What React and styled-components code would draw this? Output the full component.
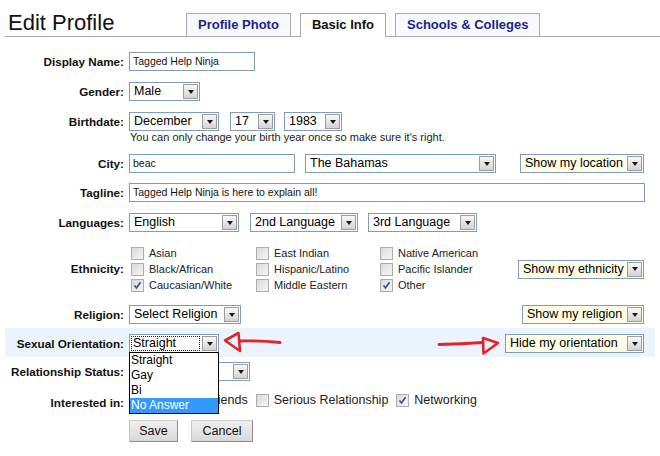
import React from "react";
import styled, { createGlobalStyle } from "styled-components";

const GlobalStyle = createGlobalStyle`
  html, body {
    margin: 0;
    padding: 0;
    background: #ffffff;
  }
  body {
    font-family: "Liberation Sans", Arial, sans-serif;
    color: #000;
  }
`;

const Page = styled.div`
  width: 660px;
  height: 456px;
  position: relative;
  overflow: hidden;
  background: #fff;
`;

const Header = styled.div`
  display: flex;
  align-items: flex-end;
  height: 36px;
  margin-left: 5px;
  padding-left: 3px;
  border-bottom: 1px solid #a9a9a9;
`;

const Title = styled.h1`
  width: 178px;
  margin: 0;
  font-size: 22px;
  font-weight: normal;
  line-height: 26px;
  color: #111;
`;

const Tabs = styled.div`
  display: flex;
  gap: 9px;
`;

const Tab = styled.div`
  height: ${(p) => (p.$active ? 23 : 22)}px;
  margin-bottom: ${(p) => (p.$active ? -1 : 0)}px;
  padding: 0 11px;
  border: 1px solid #a9a9a9;
  border-bottom: none;
  background: ${(p) => (p.$active ? "#ffffff" : "#f6f9fe")};
  color: ${(p) => (p.$active ? "#111" : "#1d1f8c")};
  font-size: 13px;
  font-weight: bold;
  line-height: 22px;
  white-space: nowrap;
`;

const Form = styled.div`
  width: 650px;
  margin-left: 5px;
`;

const Row = styled.div`
  display: grid;
  grid-template-columns: 119px 1fr;
  column-gap: 5px;
  align-items: start;
  margin-top: ${(p) => p.$mt}px;
  padding: ${(p) => (p.$band ? "6px 11px 4px 0" : "0 11px 0 0")};
  background: ${(p) => (p.$band ? "#ebf3fc" : "transparent")};
`;

const Label = styled.div`
  text-align: right;
  font-size: 11.7px;
  font-weight: bold;
  line-height: ${(p) => p.$lh || 19}px;
  color: #111;
  white-space: nowrap;
`;

const Field = styled.div`
  display: flex;
  align-items: ${(p) => (p.$center ? "center" : "flex-start")};
  min-width: 0;
`;

const Stack = styled.div`
  display: flex;
  flex-direction: column;
`;

const Controls = styled.div`
  display: flex;
`;

const Help = styled.div`
  padding-left: 1px;
  font-size: 11px;
  line-height: 13px;
  color: #222;
  white-space: nowrap;
`;

const TextInput = styled.div`
  box-sizing: border-box;
  width: ${(p) => p.$w}px;
  height: 19px;
  flex-shrink: 0;
  padding-left: 3px;
  border: 1px solid #7f9db9;
  background: #fff;
  font-size: 10.5px;
  line-height: 17px;
  color: #111;
  white-space: nowrap;
  overflow: hidden;
`;

const SelectBox = styled.div`
  position: relative;
  box-sizing: border-box;
  display: flex;
  align-items: center;
  flex-shrink: 0;
  width: ${(p) => p.$w}px;
  height: 19px;
  margin-left: ${(p) => (p.$right ? "auto" : `${p.$ml || 0}px`)};
  border: 1px solid #7f9db9;
  background: ${(p) => (p.$yellow ? "#fffde6" : "#ffffff")};
`;

const SelectText = styled.span`
  flex: 1;
  box-sizing: border-box;
  height: 15px;
  margin: 0 2px 0 1px;
  padding-left: ${(p) => (p.$focus ? 2 : 3)}px;
  outline: ${(p) => (p.$focus ? "1px dotted #222" : "none")};
  outline-offset: -1px;
  font-size: 12.5px;
  line-height: 15px;
  white-space: nowrap;
  overflow: hidden;
`;

const ArrowButton = styled.span`
  box-sizing: border-box;
  display: flex;
  align-items: center;
  justify-content: center;
  width: 15px;
  height: 15px;
  margin-right: 1px;
  border: 1px solid #9d9d9d;
  background: linear-gradient(#f8f8f8, #d3d3d3);
  &::after {
    content: "";
    border-left: 3.5px solid transparent;
    border-right: 3.5px solid transparent;
    border-top: 4px solid #1a1a1a;
  }
`;

const OptionList = styled.div`
  position: absolute;
  top: 17px;
  left: -1px;
  z-index: 5;
  box-sizing: border-box;
  width: ${(p) => p.$w}px;
  border: 1px solid #000;
  background: #fff;
`;

const Option = styled.div`
  padding-left: 1px;
  font-size: 12px;
  line-height: 15px;
  background: ${(p) => (p.$hover ? "#3399ff" : "transparent")};
  color: ${(p) => (p.$hover ? "#fff" : "#000")};
  white-space: nowrap;
`;

const CheckGrid = styled.div`
  display: grid;
  grid-template-columns: 125px 124px 130px;
  grid-auto-rows: 16px;
`;

const CheckRow = styled.div`
  display: flex;
  align-items: center;
`;

const CheckItem = styled.label`
  display: flex;
  align-items: center;
  margin-left: ${(p) => p.$ml || 0}px;
  margin-right: ${(p) => p.$mr || 0}px;
  font-size: ${(p) => p.$fs || 11}px;
  color: #222;
  white-space: nowrap;
`;

const Box = styled.span`
  box-sizing: border-box;
  display: inline-flex;
  align-items: center;
  justify-content: center;
  width: 13px;
  height: 13px;
  margin: 0 5px 0 2px;
  border: 1px solid #acacac;
  background: linear-gradient(135deg, #d9d9d9 0%, #f6f6f6 100%);
`;

const ButtonRow = styled.div`
  display: flex;
  gap: 13px;
`;

const Button = styled.div`
  box-sizing: border-box;
  width: ${(p) => p.$w}px;
  height: 22px;
  border: 1px solid #c9c9c9;
  border-right-color: #8c8c8c;
  border-bottom-color: #8c8c8c;
  background: linear-gradient(#f0f0f0, #d8d8d8);
  font-size: 12.5px;
  line-height: 20px;
  text-align: center;
  color: #111;
`;

const Marker = styled.svg`
  position: absolute;
  left: ${(p) => p.$x}px;
  top: ${(p) => p.$y}px;
  overflow: visible;
  pointer-events: none;
`;

const Select = ({ w, ml, right, yellow, focus, children, options, hover }) => (
  <SelectBox $w={w} $ml={ml} $right={right} $yellow={yellow}>
    <SelectText $focus={focus}>{children}</SelectText>
    <ArrowButton />
    {options && (
      <OptionList $w={w}>
        {options.map((o) => (
          <Option key={o} $hover={o === hover}>
            {o}
          </Option>
        ))}
      </OptionList>
    )}
  </SelectBox>
);

const Check = ({ checked, children, ml, mr, fs }) => (
  <CheckItem $ml={ml} $mr={mr} $fs={fs}>
    <Box>
      {checked && (
        <svg width="9" height="9" viewBox="0 0 9 9">
          <path d="M1.5 4.5 L3.5 7 L7.5 1.2" fill="none" stroke="#3b4c8c" strokeWidth="1.6" />
        </svg>
      )}
    </Box>
    {children}
  </CheckItem>
);

const ethnicities = [
  ["Asian", false],
  ["East Indian", false],
  ["Native American", false],
  ["Black/African", false],
  ["Hispanic/Latino", false],
  ["Pacific Islander", false],
  ["Caucasian/White", true],
  ["Middle Eastern", false],
  ["Other", true],
];

const App = () => {
  return (
    <Page>
      <GlobalStyle />
      <Header>
        <Title>Edit Profile</Title>
        <Tabs>
          <Tab>Profile Photo</Tab>
          <Tab $active>Basic Info</Tab>
          <Tab>Schools &amp; Colleges</Tab>
        </Tabs>
      </Header>

      <Form>
        <Row $mt={15}>
          <Label>Display Name:</Label>
          <Field>
            <TextInput $w={126}>Tagged Help Ninja</TextInput>
          </Field>
        </Row>

        <Row $mt={11}>
          <Label>Gender:</Label>
          <Field>
            <Select w={71}>Male</Select>
          </Field>
        </Row>

        <Row $mt={11}>
          <Label>Birthdate:</Label>
          <Stack>
            <Controls>
              <Select w={90}>December</Select>
              <Select w={45} ml={11}>17</Select>
              <Select w={58} ml={9}>1983</Select>
            </Controls>
            <Help>You can only change your birth year once so make sure it's right.</Help>
          </Stack>
        </Row>

        <Row $mt={10}>
          <Label>City:</Label>
          <Field>
            <TextInput $w={166}>beac</TextInput>
            <Select w={191} ml={10}>The Bahamas</Select>
            <Select w={124} right yellow>Show my location</Select>
          </Field>
        </Row>

        <Row $mt={10}>
          <Label>Tagline:</Label>
          <Field>
            <TextInput $w={516}>Tagged Help Ninja is here to explain all!</TextInput>
          </Field>
        </Row>

        <Row $mt={11}>
          <Label>Languages:</Label>
          <Field>
            <Select w={110}>English</Select>
            <Select w={108} ml={11}>2nd Language</Select>
            <Select w={109} ml={10}>3rd Language</Select>
          </Field>
        </Row>

        <Row $mt={13}>
          <Label $lh={48}>Ethnicity:</Label>
          <Field $center>
            <CheckGrid>
              {ethnicities.map(([name, checked]) => (
                <CheckRow key={name}>
                  <Check checked={checked}>{name}</Check>
                </CheckRow>
              ))}
            </CheckGrid>
            <Select w={126} right yellow>Show my ethnicity</Select>
          </Field>
        </Row>

        <Row $mt={12}>
          <Label>Religion:</Label>
          <Field>
            <Select w={112}>Select Religion</Select>
            <Select w={122} right yellow>Show my religion</Select>
          </Field>
        </Row>

        <Row $mt={4} $band>
          <Label>Sexual Orientation:</Label>
          <Field>
            <Select
              w={90}
              focus
              options={["Straight", "Gay", "Bi", "No Answer"]}
              hover="No Answer"
            >
              Straight
            </Select>
            <Select w={139} right yellow>Hide my orientation</Select>
          </Field>
        </Row>

        <Row $mt={5}>
          <Label>Relationship Status:</Label>
          <Field>
            <Select w={121} />
          </Field>
        </Row>

        <Row $mt={12}>
          <Label>Interested in:</Label>
          <Field $center>
            <CheckRow>
              <Check fs={12.5} ml={57} mr={6}>Friends</Check>
              <Check fs={12.5} mr={6}>Serious Relationship</Check>
              <Check fs={12.5} checked>Networking</Check>
            </CheckRow>
          </Field>
        </Row>

        <Row $mt={8}>
          <div />
          <ButtonRow>
            <Button $w={49}>Save</Button>
            <Button $w={62}>Cancel</Button>
          </ButtonRow>
        </Row>
      </Form>

      <Marker $x={220} $y={328} width="64" height="26" viewBox="0 0 64 26">
        <path
          d="M5 12.5 L18.5 5 L20 23 Z"
          fill="none"
          stroke="#e3232b"
          strokeWidth="2.6"
          strokeLinejoin="round"
        />
        <path d="M20.5 13 Q40 12.5 60 14.5" fill="none" stroke="#e3232b" strokeWidth="2.8" strokeLinecap="round" />
      </Marker>

      <Marker $x={434} $y={332} width="68" height="26" viewBox="0 0 68 26">
        <path d="M5 12.5 Q27 12 49 10.5" fill="none" stroke="#e3232b" strokeWidth="2.8" strokeLinecap="round" />
        <path
          d="M49 6 L49.5 21.5 L64 11 Z"
          fill="none"
          stroke="#e3232b"
          strokeWidth="2.6"
          strokeLinejoin="round"
        />
      </Marker>
    </Page>
  );
};

export default App;
